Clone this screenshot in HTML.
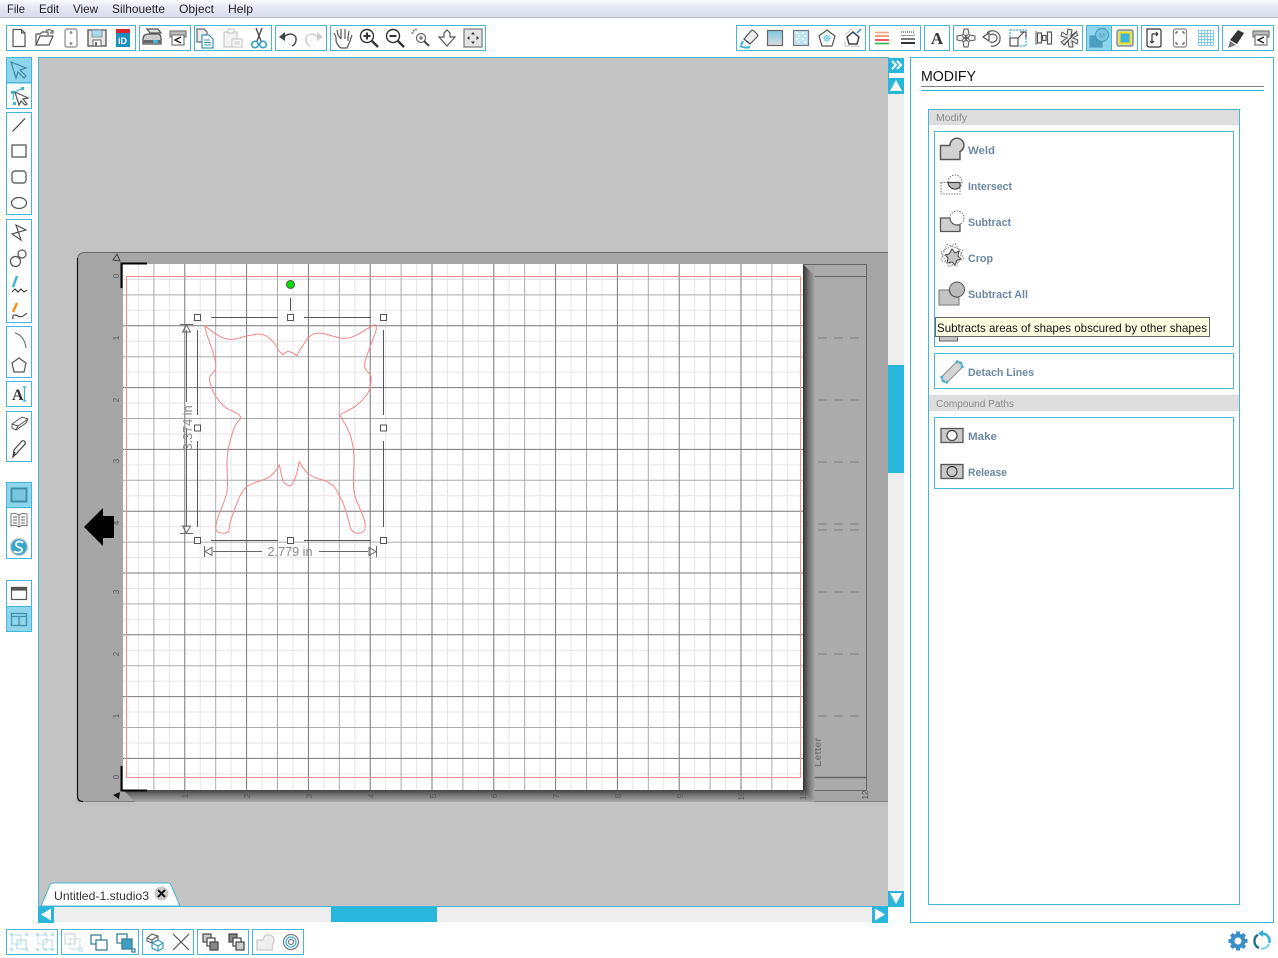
<!DOCTYPE html>
<html><head><meta charset="utf-8"><title>Silhouette Studio</title>
<style>
html,body{margin:0;padding:0;background:#fff;width:1278px;height:958px;overflow:hidden}
svg{display:block}
text{font-family:"Liberation Sans",sans-serif}
.m{font-size:12px;fill:#222}
.b{font-size:11px;font-weight:bold;fill:#6d88a4}
.h{font-size:10px;fill:#888}
.r{font-size:8px;fill:#555}
.i{fill:none;stroke:#555;stroke-width:1.2}
.g{fill:none;stroke:#45b5d9;stroke-width:1}
</style></head><body>
<svg width="1278" height="958" viewBox="0 0 1278 958" xmlns="http://www.w3.org/2000/svg">
<defs>
<linearGradient id="mb" x1="0" y1="0" x2="0" y2="1"><stop offset="0" stop-color="#fbfbfe"/><stop offset=".4" stop-color="#e6e8f5"/><stop offset="1" stop-color="#d9dcee"/></linearGradient>
<linearGradient id="sr" x1="0" y1="0" x2="1" y2="0"><stop offset="0" stop-color="#333"/><stop offset=".5" stop-color="#777"/><stop offset="1" stop-color="#a8a8a8"/></linearGradient>
<linearGradient id="sb" x1="0" y1="0" x2="0" y2="1"><stop offset="0" stop-color="#444"/><stop offset=".5" stop-color="#7c7c7c"/><stop offset="1" stop-color="#a8a8a8"/></linearGradient>
<linearGradient id="bl" x1="0" y1="0" x2="0" y2="1"><stop offset="0" stop-color="#7cc8e2"/><stop offset="1" stop-color="#ddd"/></linearGradient>
</defs>
<rect width="1278" height="958" fill="#fff"/>
<!-- menu -->
<rect width="1278" height="17" fill="url(#mb)"/>
<rect y="17" width="1278" height="1" fill="#b9bcc9"/>
<text class="m" x="7" y="13" textLength="18" lengthAdjust="spacingAndGlyphs">File</text>
<text class="m" x="39" y="13" textLength="20" lengthAdjust="spacingAndGlyphs">Edit</text>
<text class="m" x="73" y="13" textLength="25" lengthAdjust="spacingAndGlyphs">View</text>
<text class="m" x="112" y="13" textLength="53" lengthAdjust="spacingAndGlyphs">Silhouette</text>
<text class="m" x="179" y="13" textLength="35" lengthAdjust="spacingAndGlyphs">Object</text>
<text class="m" x="228" y="13" textLength="25" lengthAdjust="spacingAndGlyphs">Help</text>

<!-- top toolbar groups -->
<g class="g">
<rect x="6.500" y="25.500" width="129" height="25"/><rect x="139.500" y="25.500" width="51" height="25"/><rect x="194.500" y="25.500" width="77" height="25"/><rect x="275.500" y="25.500" width="51" height="25"/><rect x="330.500" y="25.500" width="155" height="25"/>
<rect x="736.500" y="25.500" width="129" height="25"/><rect x="869.500" y="25.500" width="51" height="25"/><rect x="924.500" y="25.500" width="25" height="25"/><rect x="953.500" y="25.500" width="129" height="25"/>
<rect x="1086.500" y="25.500" width="25" height="25" fill="#8fd5ec"/><rect x="1111.500" y="25.500" width="26" height="25"/><rect x="1141.500" y="25.500" width="77" height="25"/><rect x="1222.500" y="25.500" width="51" height="25"/>
</g>
<!-- top icons left -->
<g class="i">
<g transform="translate(19 38)"><path d="M-6-8.500H2.500L6-5V8.500H-6Z"/><path d="M2.500-8.500V-5H6"/></g>
<g transform="translate(45 38)"><path d="M-9 7V-4H-5L-3-6H3V-3"/><path d="M-9 7L-5-2H8L4 7Z"/><path d="M1-7C3-9 6-9 7-6" stroke="#666"/><path d="M8-8V-5H5" stroke="#666"/></g>
<g transform="translate(71 38)" stroke="#888"><rect x="-6" y="-9" width="12" height="18" rx="2"/><circle cx="0" cy="-5.500" r=".8" fill="#666"/><circle cx="0" cy="5.500" r=".8" fill="#666"/></g>
<g transform="translate(97 38)" stroke="#666" stroke-width="1.500"><path d="M-9-8H9V8H-9Z" fill="#e6e6e6"/><rect x="-5" y="-8" width="10" height="7" fill="#a6d9ec" stroke="#888" stroke-width=".8"/><rect x="-4" y="2" width="8" height="6" fill="#fff" stroke-width="1"/><rect x="-2" y="4" width="2" height="4" fill="#666" stroke="none"/></g>
<g transform="translate(123 38)" stroke="none"><rect x="-7" y="-9" width="14" height="18" fill="#1a8fc0"/><rect x="-7" y="-9" width="14" height="4" fill="#d8262c"/><text x="-5" y="6" font-size="9" font-weight="bold" style="fill:#fff">iD</text></g>
<g transform="translate(152 38)"><path d="M-5-9H6L9-5H-2Z" fill="#ddd"/><path d="M-9 1C-9-3-6-4-3-4H6C8-4 9-2 9 1V6H-9Z" fill="#ccc" stroke-width="1.300"/><rect x="-9" y="2" width="18" height="3" fill="#666" stroke="none"/><rect x="1" y="2" width="5" height="3" fill="#3fb3d9" stroke="none"/></g>
<g transform="translate(178 38)" stroke="#777"><rect x="-8" y="-7" width="16" height="6" fill="#bbb"/><rect x="-6" y="-3" width="12" height="10" fill="#fff"/><path d="M3-1L-3 2L3 5" stroke="#222" stroke-width="1.400"/></g>
<g transform="translate(206 38)" stroke="#666"><path d="M-9-9H-2L1-6V4H-9Z" fill="#eee"/><path d="M-4-3H3L7 1V10H-4Z" fill="#fff" stroke="#3a93b4"/><path d="M-2 2H4M-2 4.500H5M-2 7H5" stroke="#3a93b4" stroke-width=".9"/></g>
<g transform="translate(233 38)" stroke="#ccc"><rect x="-9" y="-6" width="13" height="15" fill="#f2f2f2"/><rect x="-5" y="-9" width="6" height="4" fill="#fff"/><rect x="-1" y="1" width="10" height="8" fill="#fff"/><path d="M1 4H7M1 6H7"/></g>
<g transform="translate(259 38)"><path d="M-3-10L2 3M3-10L-2 3" stroke="#444" stroke-width="1.300"/><circle cx="-4" cy="6.500" r="3.300" stroke="#2f9cc4" stroke-width="1.500"/><circle cx="4" cy="6.500" r="3.300" stroke="#2f9cc4" stroke-width="1.500"/></g>
<g transform="translate(288 38)"><path d="M-4-1C1-6 9-4 8 2C8 5 6 7 4 8" stroke="#444" stroke-width="1.400"/><path d="M-9-1L-3-6V3Z" fill="#444" stroke="none"/></g>
<g transform="translate(314 38)" stroke="#ccc"><path d="M4-1C-1-6-9-4-8 2C-8 5-6 7-4 8" stroke-width="1.400"/><path d="M9-1L3-6V3Z" fill="#ccc" stroke="none"/></g>
<g transform="translate(343 38)"><path d="M-7-1L-9-5M-7-1V2C-7 5-4 9-2 10H4L7 3L9-3M-5-3L-6-8M-5-3L-2 1M-2-2L-2-9M-2 1V-2M2-2V-9M2 1V-2M5-1L6-7M5 3V-1"/></g>
<g transform="translate(369 38)"><circle cx="-2" cy="-2" r="6.500" stroke="#333" stroke-width="1.400"/><path d="M-5.500-2H1.500M-2-5.500V1.500" stroke="#333" stroke-width="2"/><path d="M3 3L9 9" stroke="#333" stroke-width="2.400"/></g>
<g transform="translate(395 38)"><circle cx="-2" cy="-2" r="6.500" stroke="#333" stroke-width="1.400"/><path d="M-5.500-2H1.500" stroke="#333" stroke-width="2"/><path d="M3 3L9 9" stroke="#333" stroke-width="2.400"/></g>
<g transform="translate(421 38)"><circle cx="0" cy="0" r="4.500" stroke="#666"/><path d="M-2 0H2M0-2V2" stroke="#666"/><path d="M3 3L8 8" stroke="#444" stroke-width="2"/><path d="M-8-8L-6-6M-5-9.500V-7M-9.500-5H-7" stroke="#555" stroke-dasharray="2 1"/></g>
<g transform="translate(447 38)"><path d="M-8-1H-3V-5L0-8L3-5V-1H8L0 8Z"/></g>
<g transform="translate(473 38)" stroke="#777"><rect x="-9" y="-9" width="18" height="18" fill="#e4e4e4"/><path d="M0-6L2-3.500H-2ZM0 6L2 3.500H-2ZM-6 0L-3.500-2V2ZM6 0L3.500-2V2Z" fill="#333" stroke="none"/></g>
</g>
<!-- top icons right -->
<g class="i">
<g transform="translate(749 38)"><path d="M-5 1L2-7C3-8 4-8 5-7L8-4C9-3 9-2 8-1L1 6Z" fill="#eee"/><path d="M-5 1L1 6" /><path d="M-9 8C-5 10 -2 10 1 9" stroke="#3fb3d9" stroke-width="2"/><path d="M-6 3L-8 7" stroke="#3fb3d9" stroke-width="2"/></g>
<g transform="translate(775 38)"><rect x="-7.500" y="-7.500" width="15" height="15" fill="url(#bl)" stroke="#666"/></g>
<g transform="translate(801 38)"><rect x="-7.500" y="-7.500" width="15" height="15" fill="#bfe5f2" stroke="#777"/><path d="M-5-5H-3M1-5H3M-3-2H-1M3-2H5M-5 1H-3M1 1H3M-3 4H-1M3 4H5" stroke="#fff" stroke-width="1.500"/></g>
<g transform="translate(827 38)"><path d="M0-8L8-2L5 8H-5L-8-2Z"/><circle r="2.500" stroke="#5fc0de" stroke-width=".8"/><path d="M0-5V5M-5 0H5M-3-3L3 3M-3 3L3-3" stroke="#7ccbe6" stroke-width=".7"/></g>
<g transform="translate(853 38)"><path d="M0-6L6-1L4 6H-4L-6-1Z" stroke-width="1.500" stroke="#444"/><path d="M-1-9L-8-3M-8 3V8H6" stroke="#ccc"/><path d="M4-5L8-9" stroke="#2f9cc4" stroke-width="1.500"/></g>
<g transform="translate(882 38)" stroke-width="1.600"><path d="M-7-5.500H7" stroke="#f0a585"/><path d="M-7-2H7" stroke="#ef8a50"/><path d="M-7 2H7" stroke="#e34"/><path d="M-7 5.500H7" stroke="#2eb54a"/></g>
<g transform="translate(908 38)"><path d="M-7-6H7" stroke="#555" stroke-dasharray="1 1"/><path d="M-7-2.500H7" stroke="#999"/><path d="M-7 1H7" stroke="#444" stroke-width="1.400"/><path d="M-7 5H7" stroke="#333" stroke-width="2"/></g>
<text x="937" y="44" font-size="17" font-weight="bold" text-anchor="middle" style="font-family:'Liberation Serif',serif;fill:#333;stroke:none">A</text>
<g transform="translate(966 38)" stroke-width="1"><path d="M-2-9H2L3-4L0-2L-3-4ZM-2 9H2L3 4L0 2L-3 4ZM-9-2V2L-4 3L-2 0L-4-3ZM9-2V2L4 3L2 0L4-3Z" fill="#eee"/><circle r="1.200" fill="#555"/></g>
<g transform="translate(992 38)" stroke-width="1.200"><path d="M-5-5C0-10 9-6 8 1C8 6 3 9-1 8"/><path d="M-2 4C2 5 5 3 5 0C5-3 1-5-2-3"/><path d="M-9-1L-3-5V3Z" fill="#fff"/></g>
<g transform="translate(1018 38)"><rect x="-8" y="-8" width="16" height="16" stroke="#3fb3d9" stroke-dasharray="2 1"/><rect x="-8" y="0" width="8" height="8" fill="#fff"/><path d="M2-6H8V0M0 0L6-6"/></g>
<g transform="translate(1044 38)"><rect x="-6.500" y="-5" width="4" height="10"/><rect x="-1.500" y="-2.500" width="3.500" height="5"/><path d="M-8-7V7" stroke="#777"/><rect x="3.500" y="-6" width="4" height="12"/></g>
<g transform="translate(1070 38)" stroke-width="1"><path d="M-2-9L2-8L1-2L6-6L8-3L3 0L8 2L7 6L2 3L3 9L-1 9L-2 3L-6 7L-9 4L-3 0L-9-2L-8-6L-3-3Z" fill="#e6e6e6"/><path d="M-6 7L7-7" stroke="#444"/></g>
<g transform="translate(1099 38)"><rect x="-9" y="-2" width="12" height="11" fill="#4a9fbf" stroke="#4a9fbf"/><circle cx="3" cy="-3" r="6.500" fill="#7cc7e0" stroke="#4a9fbf"/><text x="3" y="0" font-size="7" text-anchor="middle" style="fill:#4a9fbf;stroke:none">M</text></g>
<g transform="translate(1125 38)"><rect x="-8" y="-8" width="16" height="16" rx="2" fill="#bfe1ee" stroke="#777"/><rect x="-5.500" y="-5.500" width="11" height="11" rx="1" fill="#3fb3d9" stroke="#f5e11b" stroke-width="2"/></g>
<g transform="translate(1154 38)" stroke="#333"><path d="M-7-9H5Q7-9 7-7V7Q7 9 5 9H-4Q-7 9-7 7Z"/><path d="M-2-4V5M-2 5L-4 3M-2 5L0 3M-2-4H4M4-4L2-6M4-4L2-2"/></g>
<g transform="translate(1180 38)" stroke="#888"><rect x="-6.500" y="-9" width="13" height="18" rx="2"/><path d="M-4-6H-2M2-6H4M-4 6H-2M2 6H4M-4-6V-4M4-6V-4M-4 6V4M4 6V4" stroke="#666"/></g>
<g transform="translate(1206 38)" stroke="#7ccbe6" stroke-width=".9"><rect x="-7.500" y="-7.500" width="15" height="15"/><path d="M-4.500-7.500V7.500M-1.500-7.500V7.500M1.500-7.500V7.500M4.500-7.500V7.500M-7.500-4.500H7.500M-7.500-1.500H7.500M-7.500 1.500H7.500M-7.500 4.500H7.500"/></g>
<g transform="translate(1235 38)" stroke="none"><path d="M-5 2L3-8L9-5L2 6Z" fill="#333"/><path d="M-5 3L1 7L-7 10Z" fill="#777"/></g>
<g transform="translate(1261 38)" stroke="#777"><rect x="-8" y="-7" width="16" height="6" fill="#bbb"/><rect x="-6" y="-3" width="12" height="10" fill="#fff"/><path d="M3-1L-3 2L3 5" stroke="#222" stroke-width="1.400"/></g>
</g>

<!-- canvas -->
<rect x="38.500" y="57.500" width="850" height="849" fill="#c3c3c3" stroke="#45b5d9"/>
<!-- mat -->
<path d="M77 802V260Q77 252 85 252H888V802Z" fill="#a6a6a6"/>
<path d="M77.500 796V260Q77.500 252.500 85 252.500H888" fill="none" stroke="#6a6a6a"/>
<path d="M77.500 258V796Q77.500 801.500 83 801.500" fill="none" stroke="#111" stroke-width="1.200"/>
<path d="M83 801.500H888" stroke="#808080" fill="none"/>
<!-- right mat area -->
<rect x="815" y="264" width="52" height="526" fill="#ababab"/>
<g fill="none" stroke="#666">
<path d="M803 264.500H867M803 276.500H867M866.500 264V790M803 790.500H867"/>
<path d="M803 777.500H867" stroke-width="1.600"/>
</g>
<g fill="none" stroke="#7d7d7d" stroke-width="1" stroke-dasharray="9 7">
<path d="M818 338H860M818 400H860M818 462H860M818 524H860M818 530H860M818 592H860M818 654H860M818 716H860"/>
</g>
<text transform="translate(821 767) rotate(-90)" font-size="10.500" font-weight="bold" style="fill:#777">Letter</text>
<!-- paper shadow -->
<polygon points="803,264 815,276 815,802 803,790" fill="url(#sr)"/>
<polygon points="123,790 803,790 815,802 135,802" fill="url(#sb)"/>
<!-- paper -->
<rect x="123" y="264" width="680" height="526" fill="#fff"/>
<g fill="none">
<path stroke="#e6e6e6" d="M138.450 264V790M169.350 264V790M200.250 264V790M231.150 264V790M262.050 264V790M292.950 264V790M323.850 264V790M354.750 264V790M385.650 264V790M416.550 264V790M447.450 264V790M478.350 264V790M509.250 264V790M540.150 264V790M571.050 264V790M601.950 264V790M632.850 264V790M663.750 264V790M694.650 264V790M725.550 264V790M756.450 264V790M787.350 264V790M123 279.450H803M123 310.350H803M123 341.250H803M123 372.150H803M123 403.050H803M123 433.950H803M123 464.850H803M123 495.750H803M123 526.650H803M123 557.550H803M123 588.450H803M123 619.350H803M123 650.250H803M123 681.150H803M123 712.050H803M123 742.950H803M123 773.850H803"/>
<path stroke="#ababab" d="M153.900 264V790M215.700 264V790M277.500 264V790M339.300 264V790M401.100 264V790M462.900 264V790M524.700 264V790M586.500 264V790M648.300 264V790M710.100 264V790M771.900 264V790M123 294.900H803M123 356.700H803M123 418.500H803M123 480.300H803M123 542.100H803M123 603.900H803M123 665.700H803M123 727.500H803"/>
<path stroke="#787878" d="M184.800 264V790M246.600 264V790M308.400 264V790M370.200 264V790M432 264V790M493.800 264V790M555.600 264V790M617.400 264V790M679.200 264V790M741 264V790M123 325.800H803M123 387.600H803M123 449.400H803M123 511.200H803M123 573H803M123 634.800H803M123 696.600H803M123 758.400H803"/>
<rect x="126.500" y="276.500" width="674" height="501" stroke="#f58f8f"/>
</g>
<!-- corner marks -->
<path d="M121.500 288V263.500H147" fill="none" stroke="#000" stroke-width="2"/>
<path d="M121.500 766V790.500H147" fill="none" stroke="#000" stroke-width="2"/>
<path d="M113 260L117 254L120 261Z" fill="none" stroke="#444"/>
<path d="M113 795L120 792L119 799Z" fill="#111"/>
<!-- rulers -->
<g class="r">
<text transform="translate(119 276) rotate(-90)" text-anchor="middle">0</text><text transform="translate(119 338) rotate(-90)" text-anchor="middle">1</text><text transform="translate(119 400) rotate(-90)" text-anchor="middle">2</text><text transform="translate(119 461) rotate(-90)" text-anchor="middle">3</text><text transform="translate(119 523) rotate(-90)" text-anchor="middle">4</text><text transform="translate(119 592) rotate(-90)" text-anchor="middle">3</text><text transform="translate(119 654) rotate(-90)" text-anchor="middle">2</text><text transform="translate(119 716) rotate(-90)" text-anchor="middle">1</text><text transform="translate(119 777) rotate(-90)" text-anchor="middle">0</text>
<text transform="translate(188 796) rotate(-90)" text-anchor="middle">1</text><text transform="translate(250 796) rotate(-90)" text-anchor="middle">2</text><text transform="translate(312 796) rotate(-90)" text-anchor="middle">3</text><text transform="translate(374 796) rotate(-90)" text-anchor="middle">4</text><text transform="translate(436 796) rotate(-90)" text-anchor="middle">5</text><text transform="translate(497 796) rotate(-90)" text-anchor="middle">6</text><text transform="translate(559 796) rotate(-90)" text-anchor="middle">7</text><text transform="translate(621 796) rotate(-90)" text-anchor="middle">8</text><text transform="translate(683 796) rotate(-90)" text-anchor="middle">9</text><text transform="translate(744 796) rotate(-90)" text-anchor="middle">10</text><text transform="translate(806 796) rotate(-90)" text-anchor="middle">11</text><text transform="translate(868 795) rotate(-90)" text-anchor="middle">12</text>
</g>
<!-- big arrow -->
<path d="M84 527L103 508V516H114V538H103V546Z" fill="#000"/>
<!-- shape -->
<path fill="none" stroke="#f58686" stroke-width="1" d="M204.700 325.700C214 333 222 340 231.700 339.300C240 339 246 335 253 335C262 332 268 336 273 341.700C276 345 278 349 280 352L283.300 355C285 352 288 351 289.300 351.700C292 352 295 354 296.700 356C299 352 300 349 303.300 345C307 338 311 334 316.700 333.300C326 332 335 339 346.700 338.300C356 337 366 329 373 325.500C375 324 376.500 325 376.300 329C375 336 369 348 366.700 356.700C365 361 364 364 365 368C366 371 370 373 371 376.700C371.500 384 370 390 366.700 395C362 401 358 404 355 406.700C350 410 344 412 339.300 415L341.500 418C345 423 350 433 351.700 440C353 447 354 451 354 456.700C354.500 470 352 482 354.300 493C356 503 364 515 365 523.300C365.500 528 365 531 363.300 531.700C360 533.500 357 533.500 355 532.700C352 532 351 529 350 526.700C348 518 345 505 340 496.700C337 491 335 486 330 483.300C323 479 316 479 310 475C305 472 302 466 299.300 461.700C298 467 297.500 473 295 478.300C293.500 482 292 485.700 290 485.700C287.500 485.700 285 484 283.300 481.700C281.500 477 280.500 470 279.300 465C277 470 274 473 270 476.700C263 481 253 482 246.700 486.700C243 490 240 495 238.300 500C235 508 232 516 230 523.300C229 527 229.500 530 228.300 531.700C226 533.500 223 533.500 220 532.700C216.500 532 215.500 529 215.700 526.700C217 515 224 505 226.700 493.300C229 482 226 470 227.300 456.700C228 447 231 437 233.300 430C235 425 238 421 241 418.300L239.300 415C235 411.500 231 411 226.700 408.300C222 405 218 400 215 395C212 390 210 384 209.300 378.300C210 374 215 373 215.700 368.300C216 363 215 358 213.300 353.300C211 345 206 335 204.700 325.700Z"/>
<!-- selection -->
<g fill="none" stroke="#555">
<path d="M211 317.500H278M304 317.500H371M211 540.500H278M304 540.500H371M197.500 330V415M197.500 441V527M383.500 330V415M383.500 441V527M290.500 298V311"/>
<path d="M186.500 330V402M186.500 428V527" stroke="#666"/>
<path d="M180 324.500H193M180 533.500H193M204.500 546V557M376.500 546V557M213 551.500H262M319 551.500H368" stroke="#666"/>
</g>
<g fill="none" stroke="#666"><path d="M186.500 325L182.500 332H190.500ZM186.500 533L182.500 526H190.500ZM205 551.500L212 547.500V555.500ZM376 551.500L369 547.500V555.500Z"/></g>
<g fill="#fff" stroke="#555"><rect x="194.500" y="314.500" width="6" height="6"/><rect x="287.500" y="314.500" width="6" height="6"/><rect x="380.500" y="314.500" width="6" height="6"/><rect x="194.500" y="425" width="6" height="6"/><rect x="380.500" y="425" width="6" height="6"/><rect x="194.500" y="537.500" width="6" height="6"/><rect x="287.500" y="537.500" width="6" height="6"/><rect x="380.500" y="537.500" width="6" height="6"/></g>
<circle cx="290.500" cy="284.500" r="4" fill="#0d0" stroke="#555"/>
<text x="290" y="556" font-size="13" text-anchor="middle" style="fill:#8a8a8a" textLength="45" lengthAdjust="spacingAndGlyphs">2.779 in</text>
<text transform="translate(192 428) rotate(-90)" font-size="13" text-anchor="middle" style="fill:#8a8a8a" textLength="45" lengthAdjust="spacingAndGlyphs">3.374 in</text>

<!-- tab -->
<path d="M41 906L50 885Q51 883 54 883H168Q170 883 171 885L180 906Z" fill="#fff" stroke="#45b5d9"/>
<text x="54" y="900" font-size="12" style="fill:#333" textLength="95" lengthAdjust="spacingAndGlyphs">Untitled-1.studio3</text>
<circle cx="161.500" cy="893.500" r="7" fill="#c8c8c8"/>
<path d="M158 890L165 897M165 890L158 897" stroke="#000" stroke-width="1.800"/>

<!-- scrollbars -->
<rect x="54" y="907" width="818" height="15" fill="#eee"/>
<rect x="331" y="907" width="106" height="15" fill="#29b6dc"/>
<rect x="38" y="907" width="16" height="16" fill="#29b6dc"/>
<path d="M41 914.500L51 908.500V920.500Z" fill="#fff"/>
<rect x="872" y="907" width="16" height="16" fill="#29b6dc"/>
<path d="M885 914.500L875 908.500V920.500Z" fill="#fff"/>
<rect x="888" y="94" width="16" height="797" fill="#eee"/>
<rect x="888" y="365" width="16" height="108" fill="#29b6dc"/>
<rect x="888" y="58" width="16" height="15" fill="#29b6dc"/>
<path d="M892 61L896 65L892 69M897 61L901 65L897 69" fill="none" stroke="#fff" stroke-width="2"/>
<rect x="888" y="78" width="16" height="16" fill="#29b6dc"/>
<path d="M896 80L902 91H890Z" fill="#fff"/>
<rect x="888" y="891" width="16" height="16" fill="#29b6dc"/>
<path d="M896 904L890 893H902Z" fill="#fff"/>

<!-- left toolbar -->
<g class="g">
<rect x="6.500" y="57.500" width="25" height="25" fill="#8fd5ec"/><rect x="6.500" y="83" width="25" height="25.500"/>
<rect x="6.500" y="112.500" width="25" height="102"/><rect x="6.500" y="219.500" width="25" height="103"/>
<rect x="6.500" y="326.500" width="25" height="51"/><rect x="6.500" y="381.500" width="25" height="25"/>
<rect x="6.500" y="411.500" width="25" height="50"/>
<rect x="6.500" y="482.500" width="25" height="25" fill="#8fd5ec"/><rect x="6.500" y="507.500" width="25" height="51"/>
<rect x="6.500" y="580.500" width="25" height="26"/><rect x="6.500" y="606.500" width="25" height="25" fill="#8fd5ec"/>
</g>
<g class="i">
<g transform="translate(19 70)" stroke="#3b87a6"><path d="M-8-8L7-2L1 0L7 6L5 8L-1 2L-3 8Z"/></g>
<g transform="translate(19 96)"><path d="M-4-4L9 2L4 3L8 8L6 9L2 5L0 9Z" fill="#fff"/><path d="M-6 4L-5-4L2-7" stroke="#3fb3d9"/><rect x="-8" y="-5" width="3" height="3" fill="#3fb3d9" stroke="none"/><rect x="2" y="-9" width="3" height="3" fill="#3fb3d9" stroke="none"/><rect x="-6" y="6" width="3" height="3" fill="#3fb3d9" stroke="none"/></g>
<path d="M12.500 131.500L25 118.500" stroke="#444"/>
<rect x="12" y="145" width="14" height="12" stroke="#666" stroke-width="1.400"/>
<rect x="12" y="171" width="14" height="12" rx="3" stroke="#666" stroke-width="1.400"/>
<ellipse cx="19" cy="203" rx="7.500" ry="5.500" stroke="#555"/>
<path d="M16 225L26 230L12 234L21 240Z" stroke="#555"/>
<circle cx="22" cy="254" r="4" stroke="#555"/><circle cx="15.500" cy="261.500" r="5" stroke="#555"/>
<path d="M13 287L17 276" stroke="#3fb3d9" stroke-width="2.500"/><path d="M12 292L15 289L18 292L21 289L24 292L27 290" stroke="#444"/>
<path d="M13 312L17 303" stroke="#f0931e" stroke-width="2.500"/><path d="M13 319C12 315 15 314 18 316C21 318 24 316 27 313" stroke="#444"/>
<path d="M15 333C20 334 25 339 26 348" stroke="#777"/>
<path d="M19 358L26 363L24 372H14L12 363Z" stroke="#555"/>
<text x="12" y="400" font-size="16" font-weight="bold" style="font-family:'Liberation Serif',serif;fill:#333;stroke:none">A</text><path d="M24.500 387V401M22.500 387H26.500M22.500 401H26.500" stroke="#3fb3d9"/>
<path d="M12 424L22 417L28 419L26 423L16 430L12 428ZM12 424L18 426L28 419M18 426L16 430" stroke="#555" stroke-width="1"/>
<path d="M13 457L14 450L22 441C24 440 26 442 25 444L17 453ZM13 457L15 452" stroke="#444"/>
<rect x="11.500" y="488.500" width="15" height="13" fill="#7cc7e0" stroke="#3f90ad" stroke-width="2"/>
<path d="M19 515C16 513 13 513 11 514V526C14 525 16 525 19 527C22 525 24 525 27 526V514C25 513 22 513 19 515ZM19 515V527M13 517H17M13 520H17M13 523H17M21 517H25M21 520H25M21 523H25" stroke="#666" stroke-width=".9"/>
<circle cx="19" cy="547" r="8.500" fill="#35a5cf" stroke="#ccc" stroke-width="1.400"/>
<path d="M23 543C20 540 15 542 16 545C17 548 22 547 22 550C22 553 16 553 14 551" stroke="#fff" stroke-width="1.800"/>
<rect x="11.500" y="587.500" width="15" height="12" stroke="#555"/><rect x="11.500" y="587.500" width="15" height="2.500" fill="#555" stroke="#555"/>
<rect x="11.500" y="613.500" width="15" height="12" stroke="#3f90ad" stroke-width="1.300"/><path d="M11.500 616.500H26.500M19 616.500V625.500" stroke="#3f90ad" stroke-width="1.300"/>
</g>

<!-- right panel -->
<rect x="910.500" y="57.500" width="363" height="865" fill="#fff" stroke="#45b5d9"/>
<text x="921" y="81" font-size="14.500" style="fill:#111" textLength="55" lengthAdjust="spacingAndGlyphs">MODIFY</text>
<rect x="921" y="86" width="343" height="1" fill="#808080"/>
<rect x="921" y="90" width="343" height="1" fill="#29b6dc"/>
<rect x="928.500" y="109.500" width="311" height="795" fill="#fff" stroke="#45b5d9"/>
<rect x="929" y="110" width="310" height="15" fill="#dedede"/>
<text class="h" x="936" y="121" textLength="31" lengthAdjust="spacingAndGlyphs">Modify</text>
<rect x="934.500" y="131.500" width="299" height="215" fill="#fff" stroke="#45b5d9"/>
<rect x="934.500" y="353.500" width="299" height="35" fill="#fff" stroke="#45b5d9"/>
<rect x="929" y="395" width="310" height="16" fill="#dedede"/>
<text class="h" x="936" y="407" textLength="78" lengthAdjust="spacingAndGlyphs">Compound Paths</text>
<rect x="934.500" y="417.500" width="299" height="71" fill="#fff" stroke="#45b5d9"/>
<!-- labels -->
<text class="b" x="968" y="154" textLength="27" lengthAdjust="spacingAndGlyphs">Weld</text>
<text class="b" x="968" y="190" textLength="44" lengthAdjust="spacingAndGlyphs">Intersect</text>
<text class="b" x="968" y="226" textLength="43" lengthAdjust="spacingAndGlyphs">Subtract</text>
<text class="b" x="968" y="262" textLength="25" lengthAdjust="spacingAndGlyphs">Crop</text>
<text class="b" x="968" y="298" textLength="60" lengthAdjust="spacingAndGlyphs">Subtract All</text>
<text class="b" x="968" y="376" textLength="66" lengthAdjust="spacingAndGlyphs">Detach Lines</text>
<text class="b" x="968" y="440" textLength="29" lengthAdjust="spacingAndGlyphs">Make</text>
<text class="b" x="968" y="476" textLength="39" lengthAdjust="spacingAndGlyphs">Release</text>
<!-- panel icons -->
<path d="M940.500 145.500H950A7 7 0 1 1 960 151.500V159.500H940.500Z" fill="#d2d2d2" stroke="#555" stroke-width="1.400"/>
<g fill="none" stroke="#777" stroke-dasharray="1.500 1.200"><rect x="941" y="182.500" width="19" height="11.500"/><circle cx="955" cy="182" r="7"/></g>
<path d="M948 182.500H960V186.900A7 7 0 0 1 948 182.500Z" fill="#bbb" stroke="#444" stroke-width="1.200"/>
<path d="M940.500 218H950A7 7 0 0 0 960 224.300V231.500H940.500Z" fill="#cfcfcf" stroke="#555" stroke-width="1.300"/>
<circle cx="957" cy="218" r="7" fill="none" stroke="#777" stroke-dasharray="1.500 1.200"/>
<path d="M952 249L955 253L959 251L958 256L961 259L957 260L955 265L952 262L947 263L948 258L945 255L949 254Z" fill="#c4c4c4" stroke="#444"/>
<g fill="none" stroke="#888" stroke-dasharray="1.500 1.200"><rect x="943" y="247" width="17" height="17" transform="rotate(20 952 256)"/><rect x="943" y="247" width="17" height="17" transform="rotate(60 952 256)"/></g>
<path d="M939 290H949A8 8 0 0 0 959 297V305H939Z" fill="#c4c4c4" stroke="#777"/>
<circle cx="957" cy="289.500" r="7.500" fill="#bbb" stroke="#555"/>
<g transform="rotate(-45 952 372)"><rect x="939" y="368" width="26" height="8" rx="4" fill="#d4d4d4" stroke="#888"/><g fill="#3fb3d9"><circle cx="941" cy="368.500" r="1.500"/><circle cx="941" cy="375.500" r="1.500"/><circle cx="939.500" cy="372" r="1.500"/><circle cx="963" cy="368.500" r="1.500"/><circle cx="963" cy="375.500" r="1.500"/><circle cx="964.500" cy="372" r="1.500"/></g></g>
<rect x="941" y="428.500" width="22" height="14" fill="#c9c9c9" stroke="#555" stroke-width="1.300"/><circle cx="952" cy="435.500" r="5" fill="#fff" stroke="#444" stroke-width="1.200"/>
<rect x="941" y="464.500" width="22" height="14" fill="#c9c9c9" stroke="#555" stroke-width="1.300"/><circle cx="952" cy="471.500" r="5" fill="none" stroke="#444" stroke-width="1.200"/>
<!-- tooltip -->
<rect x="939.500" y="335" width="18" height="6" fill="#c4c4c4" stroke="#666"/>
<rect x="935.500" y="317.500" width="274" height="19" fill="#ffffe1" stroke="#666"/>
<text x="937" y="332" font-size="12" style="fill:#111" textLength="270" lengthAdjust="spacingAndGlyphs">Subtracts areas of shapes obscured by other shapes</text>

<!-- bottom toolbar -->
<g class="g"><rect x="6.500" y="929.500" width="51" height="25"/><rect x="61.500" y="929.500" width="77" height="25"/><rect x="142.500" y="929.500" width="51" height="25"/><rect x="197.500" y="929.500" width="51" height="25"/><rect x="252.500" y="929.500" width="51" height="25"/></g>
<g class="i">
<g transform="translate(19 942)" stroke="#bcdfe9"><rect x="-7" y="-7" width="9" height="9"/><rect x="-2" y="-2" width="9" height="9"/><g fill="#bfe3ef" stroke="none"><rect x="-9" y="-9" width="3" height="3"/><rect x="6" y="-9" width="3" height="3"/><rect x="-9" y="6" width="3" height="3"/><rect x="6" y="6" width="3" height="3"/></g></g>
<g transform="translate(45 942)" stroke="#bcdfe9"><rect x="-7" y="-7" width="9" height="9" stroke-dasharray="2 1"/><rect x="-2" y="-2" width="9" height="9"/><g fill="#bfe3ef" stroke="none"><rect x="-9" y="-9" width="3" height="3"/><rect x="6" y="-9" width="3" height="3"/><rect x="-9" y="6" width="3" height="3"/><rect x="6" y="6" width="3" height="3"/><rect x="-1" y="-9" width="3" height="3"/><rect x="-1" y="6" width="3" height="3"/></g></g>
<g transform="translate(73 942)" stroke="#cfd8db"><rect x="-8" y="-8" width="10" height="10"/><rect x="-3" y="-3" width="10" height="10" stroke-dasharray="2 1"/><rect x="6" y="6" width="3" height="3" stroke="#bfe3ef"/></g>
<g transform="translate(99 942)" stroke="#3b7f99" stroke-width="1.300"><rect x="-8" y="-7" width="10" height="9" fill="#fff"/><rect x="-3" y="-2" width="11" height="10" fill="#fff"/></g>
<g transform="translate(125 942)" stroke="#3b7f99" stroke-width="1.300"><rect x="-8" y="-8" width="10" height="9" fill="#fff"/><rect x="-3" y="-3" width="10" height="10" fill="#3f9fc2"/><rect x="7" y="7" width="3" height="3" fill="#fff"/></g>
<g transform="translate(155 942)"><path d="M-8-4L-3-8L3-6V-2L-3 1L-8-1ZM-8-4L-3-2V1M-3-2L3-6" stroke="#666"/><path d="M-3 1L3-2L8 1V6L3 9L-3 6Z" stroke="#2f9cc4"/><path d="M-3 1L3 4L8 1M3 4V9" stroke="#2f9cc4"/></g>
<path d="M173 934L189 950M189 934L173 950" stroke="#555"/>
<g transform="translate(210 942)" stroke="#444" stroke-width="1.200"><rect x="-7" y="-8" width="8" height="8" fill="#ccc"/><rect x="-3" y="-4" width="8" height="8" fill="#fff"/><rect x="0" y="0" width="8" height="8" fill="#888"/></g>
<g transform="translate(236 942)" stroke="#444" stroke-width="1.200"><rect x="-7" y="-8" width="8" height="8" fill="#888"/><rect x="-3" y="-4" width="8" height="8" fill="#fff"/><rect x="0" y="0" width="8" height="8" fill="#ccc"/></g>
<path d="M257 940H263A5.500 5.500 0 1 1 272.500 944V950H257Z" fill="#eee" stroke="#ccc" stroke-width="1.300"/>
<g transform="translate(291 942)"><circle r="7.500" stroke="#777"/><circle r="5" stroke="#3fb3d9" stroke-width="1.300"/><circle r="2.500" stroke="#777"/></g>
</g>
<!-- gear -->
<g transform="translate(1238 941)"><circle r="5.500" fill="none" stroke="#3a8fc7" stroke-width="4"/><path d="M-2-9.500H2V-6H-2ZM-2 6H2V9.500H-2ZM-9.500-2H-6V2H-9.500ZM6-2H9.500V2H6Z" fill="#3a8fc7"/><path d="M-2-9.500H2V-6H-2ZM-2 6H2V9.500H-2ZM-9.500-2H-6V2H-9.500ZM6-2H9.500V2H6Z" fill="#3a8fc7" transform="rotate(45)"/></g>
<!-- refresh -->
<g transform="translate(1262 941)" fill="none" stroke-width="2.400"><path d="M0-7.500A7.500 7.500 0 0 1 7.300 2" stroke="#29aede"/><path d="M7 3A7.500 7.500 0 0 1-1 7.500" stroke="#8ad2ea"/><path d="M-3 7A7.500 7.500 0 0 1-4-6.300" stroke="#1f6e87"/><path d="M-4-7.500L1-11V-4Z" fill="#29aede" stroke="none"/></g>
</svg>
</body></html>
